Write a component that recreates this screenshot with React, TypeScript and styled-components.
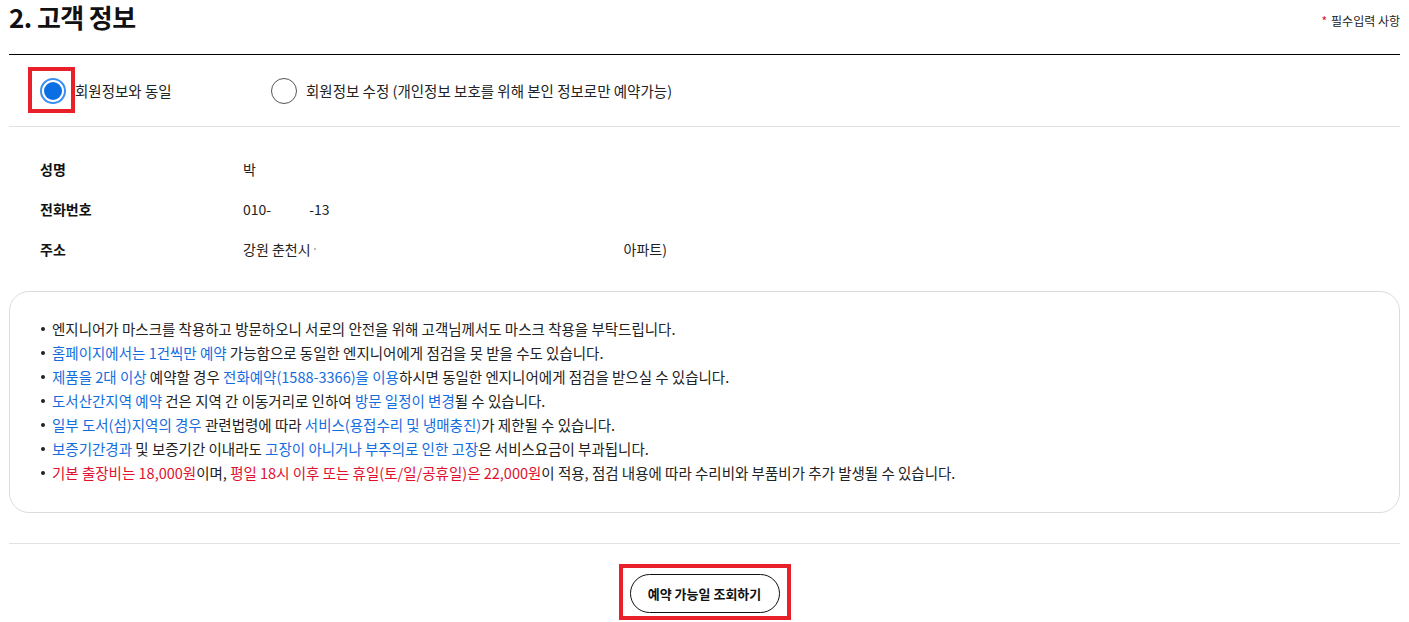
import React from "react";
import styled, { createGlobalStyle } from "styled-components";

const GlobalStyle = createGlobalStyle`
  html, body { margin: 0; padding: 0; background: #fff; }
  body {
    font-family: "Noto Sans CJK KR", "Noto Sans", sans-serif;
    color: #222;
  }
  * { box-sizing: border-box; }
`;

const Page = styled.div`
  padding: 0 9px;
  width: 1409px;
  min-height: 622px;
`;

const Header = styled.div`
  display: flex;
  justify-content: space-between;
  align-items: flex-start;
  height: 55px;
  border-bottom: 1px solid #000;
`;

const Title = styled.h2`
  margin: 0;
  font-size: 26px;
  line-height: 34px;
  font-weight: 700;
  letter-spacing: -0.6px;
  color: #111;
`;

const Required = styled.span`
  margin-top: 11px;
  font-size: 12px;
  line-height: 20px;
  color: #222;
`;

const Star = styled.span`
  color: #e0102f;
  margin-right: 4px;
`;

const RadioRow = styled.div`
  display: flex;
  align-items: center;
  height: 72px;
  padding-left: 31px;
  border-bottom: 1px solid #e2e2e2;
`;

const RadioOption = styled.label<{ $width?: number }>`
  position: relative;
  display: flex;
  align-items: center;
  gap: 9px;
  width: ${(p) => (p.$width ? `${p.$width}px` : "auto")};
  font-size: 14.5px;
  color: #222;
  cursor: pointer;
`;

const RadioCircle = styled.span<{ $checked?: boolean }>`
  position: relative;
  display: inline-block;
  width: 26px;
  height: 26px;
  border-radius: 50%;
  border: ${(p) => (p.$checked ? "2px solid #3a8ff0" : "1px solid #555")};
  background: #fff;
  &::after {
    content: "";
    display: ${(p) => (p.$checked ? "block" : "none")};
    position: absolute;
    inset: 2px;
    border-radius: 50%;
    background: #0a6fe2;
  }
`;

const RadioHighlight = styled.span`
  position: absolute;
  left: -12px;
  top: -11px;
  width: 47px;
  height: 46px;
  border: 4px solid #e8202a;
  pointer-events: none;
`;

const ButtonHighlight = styled.span`
  position: absolute;
  left: -11px;
  right: -11px;
  top: -10px;
  bottom: -7px;
  border: 4px solid #e8202a;
  pointer-events: none;
`;

const InfoList = styled.dl`
  margin: 0;
  padding: 22px 0 22px 31px;
`;

const InfoRow = styled.div`
  display: flex;
  align-items: center;
  height: 40px;
`;

const InfoLabel = styled.dt`
  width: 203px;
  font-size: 14px;
  font-weight: 700;
  color: #111;
`;

const InfoValue = styled.dd`
  margin: 0;
  font-size: 14px;
  color: #222;
  display: flex;
  align-items: center;
`;

const Gap = styled.span<{ $w: number }>`
  display: inline-block;
  width: ${(p) => p.$w}px;
`;

const Dot = styled.span`
  display: inline-block;
  width: 2px;
  height: 2px;
  margin-left: 3px;
  background: #bbb;
`;

const NoticeBox = styled.ul`
  margin: 0;
  list-style: none;
  border: 1px solid #dcdcdc;
  border-radius: 20px;
  padding: 25px 30px 27px 30px;
`;

const NoticeItem = styled.li`
  position: relative;
  padding-left: 12px;
  font-size: 14.5px;
  line-height: 24px;
  color: #222;
  letter-spacing: 0;
  &::before {
    content: "";
    position: absolute;
    left: 1px;
    top: 10px;
    width: 4px;
    height: 4px;
    border-radius: 50%;
    background: #222;
  }
`;

const Blue = styled.span`
  color: #136ddd;
`;

const Red = styled.span`
  color: #e0102f;
`;

const Footer = styled.div`
  margin-top: 30px;
  border-top: 1px solid #e2e2e2;
  display: flex;
  justify-content: center;
  padding: 30px 0 8px;
`;

const ButtonWrap = styled.div`
  position: relative;
`;

const Button = styled.button`
  display: block;
  width: 150px;
  height: 39px;
  border: 1px solid #111;
  border-radius: 20px;
  background: #fff;
  font-family: inherit;
  font-size: 13px;
  font-weight: 700;
  color: #111;
  cursor: pointer;
`;

export default function App() {
  return (
    <>
      <GlobalStyle />
      <Page>
        <Header>
          <Title>2. 고객 정보</Title>
          <Required>
            <Star>*</Star>필수입력 사항
          </Required>
        </Header>
        <RadioRow>
          <RadioOption $width={231}>
            <RadioCircle $checked />
            회원정보와 동일
            <RadioHighlight />
          </RadioOption>
          <RadioOption>
            <RadioCircle />
            회원정보 수정 (개인정보 보호를 위해 본인 정보로만 예약가능)
          </RadioOption>
        </RadioRow>
        <InfoList>
          <InfoRow>
            <InfoLabel>성명</InfoLabel>
            <InfoValue>박</InfoValue>
          </InfoRow>
          <InfoRow>
            <InfoLabel>전화번호</InfoLabel>
            <InfoValue>
              010-
              <Gap $w={38} />
              -13
            </InfoValue>
          </InfoRow>
          <InfoRow>
            <InfoLabel>주소</InfoLabel>
            <InfoValue>
              강원 춘천시
              <Dot />
              <Gap $w={308} />
              아파트)
            </InfoValue>
          </InfoRow>
        </InfoList>
        <NoticeBox>
          <NoticeItem>
            엔지니어가 마스크를 착용하고 방문하오니 서로의 안전을 위해 고객님께서도 마스크 착용을 부탁드립니다.
          </NoticeItem>
          <NoticeItem>
            <Blue>홈페이지에서는 1건씩만 예약</Blue> 가능함으로 동일한 엔지니어에게 점검을 못 받을 수도 있습니다.
          </NoticeItem>
          <NoticeItem>
            <Blue>제품을 2대 이상</Blue> 예약할 경우 <Blue>전화예약(1588-3366)을 이용</Blue>하시면 동일한 엔지니어에게 점검을 받으실 수 있습니다.
          </NoticeItem>
          <NoticeItem>
            <Blue>도서산간지역 예약</Blue> 건은 지역 간 이동거리로 인하여 <Blue>방문 일정이 변경</Blue>될 수 있습니다.
          </NoticeItem>
          <NoticeItem>
            <Blue>일부 도서(섬)지역의 경우</Blue> 관련법령에 따라 <Blue>서비스(용접수리 및 냉매충진)</Blue>가 제한될 수 있습니다.
          </NoticeItem>
          <NoticeItem>
            <Blue>보증기간경과</Blue> 및 보증기간 이내라도 <Blue>고장이 아니거나 부주의로 인한 고장</Blue>은 서비스요금이 부과됩니다.
          </NoticeItem>
          <NoticeItem>
            <Red>기본 출장비는 18,000원</Red>이며, <Red>평일 18시 이후 또는 휴일(토/일/공휴일)은 22,000원</Red>이 적용, 점검 내용에 따라 수리비와 부품비가 추가 발생될 수 있습니다.
          </NoticeItem>
        </NoticeBox>
        <Footer>
          <ButtonWrap>
            <Button>예약 가능일 조회하기</Button>
            <ButtonHighlight />
          </ButtonWrap>
        </Footer>
      </Page>
    </>
  );
}
